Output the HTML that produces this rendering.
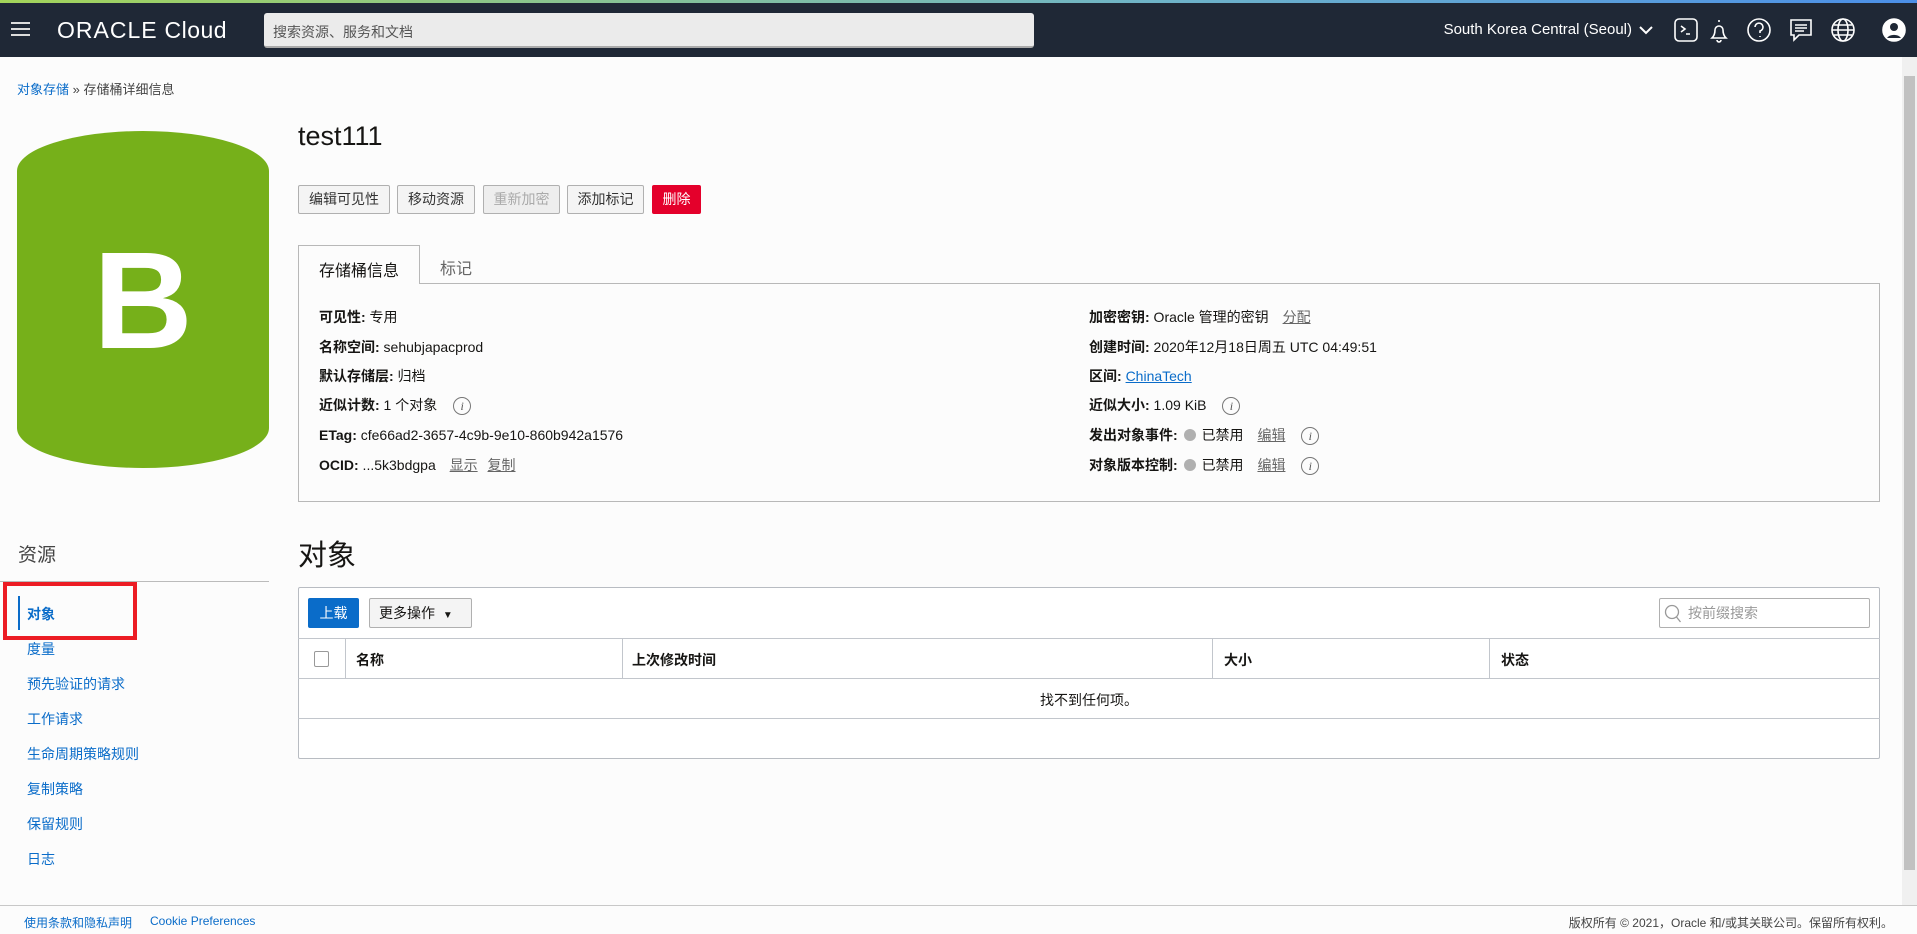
<!DOCTYPE html>
<html><head><meta charset="utf-8"><style>
*{box-sizing:border-box;margin:0;padding:0}
body{width:1917px;height:934px;overflow:hidden;background:#fcfcfc;font-family:"Liberation Sans","Noto Sans CJK SC",sans-serif;color:#161513;font-size:14px;position:relative}
.a{position:absolute}
.hdr{left:0;top:0;width:1917px;height:57px;background:#1f2836}
.grad{left:0;top:0;width:1917px;height:3px;background:linear-gradient(90deg,#a3d45a,#6fb4c8 60%,#4b8fe8)}
.btn{position:absolute;top:185px;height:29px;border:1px solid #b0b0b0;border-radius:2px;background:#f4f4f4;font-size:14px;line-height:27px;text-align:center;color:#333}
.lbl{font-weight:bold}
.row{position:absolute;font-size:14px;line-height:18px}
.u{text-decoration:underline;color:#666;margin-left:10px}
.info{display:inline-block;width:18px;height:18px;border:1px solid #777;border-radius:50%;text-align:center;font-size:12px;font-style:italic;line-height:16px;color:#555;font-family:"Liberation Serif",serif;vertical-align:middle;margin-left:12px}
.dot{display:inline-block;width:12px;height:12px;border-radius:50%;background:#b0b0b0;vertical-align:-1px;margin:0 6px 0 2px}
.side{position:absolute;left:27px;font-size:14px;color:#0a6cc9}
.th{position:absolute;top:650px;font-weight:bold;font-size:14px}
.vl{position:absolute;top:638px;width:1px;height:40px;background:#c2c6cc}
</style></head><body>
<div class="a hdr"></div><div class="a grad"></div>
<div class="a" style="left:11px;top:22px;width:19px;height:2px;background:#ddd;box-shadow:0 6px 0 #ddd,0 12px 0 #ddd"></div>
<div class="a" style="left:57px;top:17px;color:#fff;font-size:23px;letter-spacing:0.5px"><b style="font-weight:normal;letter-spacing:1px">ORACLE</b> <span style="font-weight:300">Cloud</span></div>
<div class="a" style="left:264px;top:13px;width:770px;height:35px;background:#ebebeb;border-radius:3px;border-bottom:2px solid #aaa;font-size:14px;color:#555;padding:9px 9px">搜索资源、服务和文档</div>
<div class="a" style="right:285px;top:21px;color:#fff;font-size:15px;white-space:nowrap">South Korea Central (Seoul)</div>
<svg class="a" style="left:1638px;top:24px" width="16" height="12"><path d="M2 3l6 6 6-6" stroke="#fff" stroke-width="2" fill="none"/></svg>
<svg class="a" style="left:1673px;top:17px" width="240" height="26" fill="none" stroke="#fff" stroke-width="1.6">
<rect x="2" y="2" width="22" height="22" rx="4"/><path d="M8 9l4 3-4 3M13 17h4"/>
<path d="M53 21h-14c2-2 3-4 3-8a4 4 0 0 1 8 0c0 4 1 6 3 8zM44 23a2 2 0 0 0 4 0M46 3v2"/>
<circle cx="86" cy="13" r="11"/><path d="M82 10a4 4 0 1 1 5 4v2M87 19v1"/>
<path d="M118 3h20v15h-12l-5 5v-5h-3zM122 8h12M122 11h12M122 14h9"/>
<circle cx="170" cy="13" r="11"/><ellipse cx="170" cy="13" rx="5" ry="11"/><path d="M159 13h22M161 8h18M161 18h18"/>
<circle cx="221" cy="13" r="11" fill="#fff"/><circle cx="221" cy="10" r="4" fill="#1f2836" stroke="none"/><path d="M214 21a8 6 0 0 1 14 0" fill="#1f2836" stroke="none"/>
</svg>
<div class="a" style="left:1902px;top:57px;width:15px;height:848px;background:#f0f0f0"></div>
<div class="a" style="left:1904px;top:76px;width:11px;height:794px;background:#c1c1c1"></div>
<div class="a" style="left:17px;top:79px;font-size:13px;color:#444"><span style="color:#0a6cc9">对象存储</span> » 存储桶详细信息</div>
<svg class="a" style="left:17px;top:131px" width="252" height="337"><path d="M0 40 A126 40 0 0 1 252 40 V297 A126 40 0 0 1 0 297Z" fill="#76b01a"/><text x="126" y="217" text-anchor="middle" font-family="Liberation Sans" font-weight="bold" font-size="138" fill="#fff">B</text></svg>
<div class="a" style="left:298px;top:121px;font-size:27px">test111</div>
<div class="btn" style="left:298px;width:92px">编辑可见性</div>
<div class="btn" style="left:397px;width:78px">移动资源</div>
<div class="btn" style="left:483px;width:77px;color:#aaa;background:#eee">重新加密</div>
<div class="btn" style="left:567px;width:77px">添加标记</div>
<div class="btn" style="left:652px;width:49px;background:#e4002b;border-color:#e4002b;color:#fff">删除</div>
<div class="a" style="left:298px;top:283px;width:1582px;height:219px;border:1px solid #b8b8b8;border-top:1px solid #b8b8b8"></div>
<div class="a" style="left:298px;top:245px;width:122px;height:39px;border:1px solid #b8b8b8;border-bottom:none;background:#fcfcfc;font-size:16px;padding:11px 0 0 20px">存储桶信息</div>
<div class="a" style="left:440px;top:255px;font-size:16px;color:#666">标记</div>
<div class="row" style="left:319px;top:308px"><span class="lbl">可见性:</span> 专用</div>
<div class="row" style="left:319px;top:338px"><span class="lbl">名称空间:</span> sehubjapacprod</div>
<div class="row" style="left:319px;top:367px"><span class="lbl">默认存储层:</span> 归档</div>
<div class="row" style="left:319px;top:396px"><span class="lbl">近似计数:</span> 1 个对象 <span class="info">i</span></div>
<div class="row" style="left:319px;top:426px"><span class="lbl">ETag:</span> cfe66ad2-3657-4c9b-9e10-860b942a1576</div>
<div class="row" style="left:319px;top:456px"><span class="lbl">OCID:</span> ...5k3bdgpa <span class="u">显示</span> <span class="u" style="margin-left:6px">复制</span></div>
<div class="row" style="left:1089px;top:308px"><span class="lbl">加密密钥:</span> Oracle 管理的密钥 <span class="u">分配</span></div>
<div class="row" style="left:1089px;top:338px"><span class="lbl">创建时间:</span> 2020年12月18日周五 UTC 04:49:51</div>
<div class="row" style="left:1089px;top:367px"><span class="lbl">区间:</span> <span style="color:#0a6cc9;text-decoration:underline">ChinaTech</span></div>
<div class="row" style="left:1089px;top:396px"><span class="lbl">近似大小:</span> 1.09 KiB <span class="info">i</span></div>
<div class="row" style="left:1089px;top:426px"><span class="lbl">发出对象事件:</span> <span class="dot"></span>已禁用 <span class="u">编辑</span> <span class="info">i</span></div>
<div class="row" style="left:1089px;top:456px"><span class="lbl">对象版本控制:</span> <span class="dot"></span>已禁用 <span class="u">编辑</span> <span class="info">i</span></div>
<div class="a" style="left:298px;top:532px;font-size:29px">对象</div>
<div class="a" style="left:18px;top:540px;font-size:19px;color:#444">资源</div>
<div class="a" style="left:0;top:581px;width:269px;height:1px;background:#bbb"></div>
<div class="a" style="left:18px;top:596px;width:2px;height:34px;background:#0a6cc9"></div>
<div class="side" style="top:604px;font-weight:bold">对象</div>
<div class="side" style="top:639px">度量</div>
<div class="side" style="top:674px">预先验证的请求</div>
<div class="side" style="top:709px">工作请求</div>
<div class="side" style="top:744px">生命周期策略规则</div>
<div class="side" style="top:779px">复制策略</div>
<div class="side" style="top:814px">保留规则</div>
<div class="side" style="top:849px">日志</div>
<div class="a" style="left:3px;top:582px;width:134px;height:58px;border:4px solid #ec1c24"></div>
<div class="a" style="left:298px;top:587px;width:1582px;height:172px;border:1px solid #b8bcc2;border-radius:2px;background:#fff"></div>
<div class="a" style="left:308px;top:598px;width:51px;height:30px;background:#0a6cc9;border-radius:2px;color:#fff;font-size:14px;text-align:center;line-height:30px">上载</div>
<div class="a" style="left:369px;top:598px;width:103px;height:30px;background:#f4f4f4;border:1px solid #b0b0b0;border-radius:2px;font-size:14px;line-height:28px;padding-left:9px">更多操作 <span style="font-size:10px;margin-left:4px">▼</span></div>
<div class="a" style="left:1659px;top:598px;width:211px;height:30px;border:1px solid #b0b0b0;border-radius:2px;font-size:14px;color:#999;line-height:28px;padding-left:28px">按前缀搜索</div>
<svg class="a" style="left:1664px;top:604px" width="18" height="20"><circle cx="8" cy="8" r="6.5" stroke="#999" stroke-width="1.3" fill="none"/><path d="M12.5 13l4 5" stroke="#999" stroke-width="1.3"/></svg>
<div class="a" style="left:298px;top:638px;width:1582px;height:1px;background:#c2c6cc"></div>
<div class="a" style="left:298px;top:678px;width:1582px;height:1px;background:#c2c6cc"></div>
<div class="a" style="left:298px;top:718px;width:1582px;height:1px;background:#c2c6cc"></div>
<div class="vl" style="left:345px"></div><div class="vl" style="left:622px"></div><div class="vl" style="left:1212px"></div><div class="vl" style="left:1489px"></div>
<div class="a" style="left:314px;top:651px;width:15px;height:16px;border:1px solid #999;border-radius:2px"></div>
<div class="th" style="left:356px">名称</div><div class="th" style="left:632px">上次修改时间</div><div class="th" style="left:1224px">大小</div><div class="th" style="left:1501px">状态</div>
<div class="a" style="left:298px;top:690px;width:1582px;text-align:center;font-size:14px">找不到任何项。</div>
<div class="a" style="left:0;top:905px;width:1917px;height:1px;background:#c8c8c8"></div>
<div class="a" style="left:24px;top:914px;font-size:12px;color:#0a6cc9">使用条款和隐私声明</div>
<div class="a" style="left:150px;top:914px;font-size:12px;color:#0a6cc9">Cookie Preferences</div>
<div class="a" style="right:24px;top:914px;font-size:12px;color:#444">版权所有 © 2021，Oracle 和/或其关联公司。保留所有权利。</div>
</body></html>
